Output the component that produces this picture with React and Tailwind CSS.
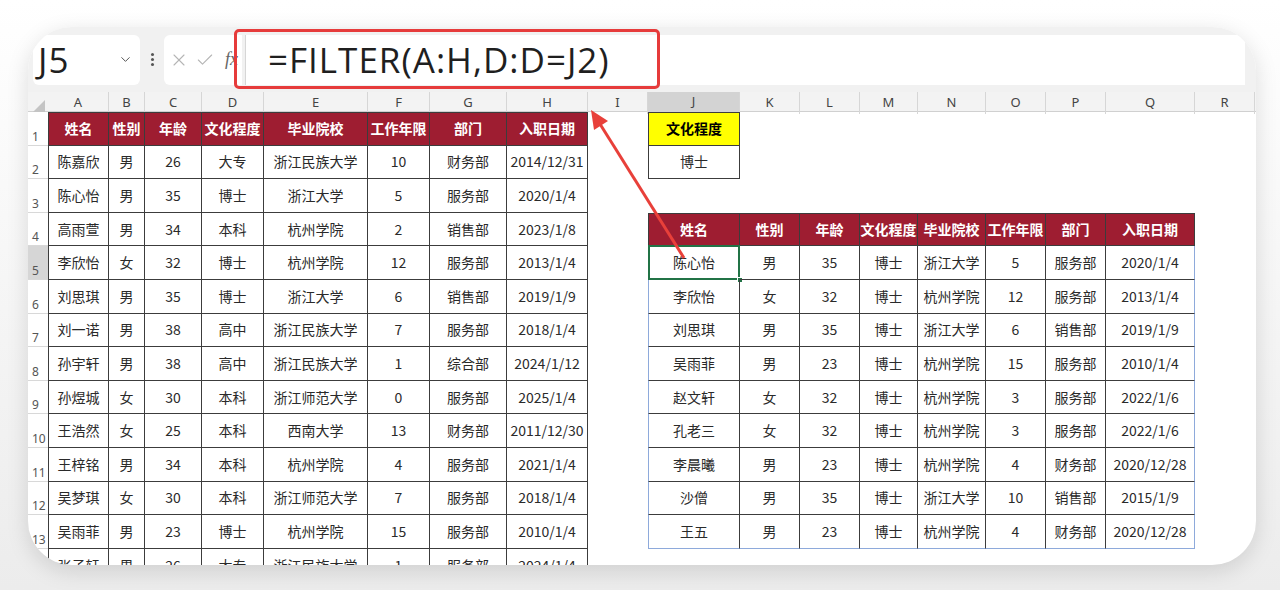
import { ChevronDown, X, Check } from 'lucide-react';
import clsx from 'clsx';

const head = ['姓名', '性别', '年龄', '文化程度', '毕业院校', '工作年限', '部门', '入职日期'];

const left = [
  ['陈嘉欣', '男', '26', '大专', '浙江民族大学', '10', '财务部', '2014/12/31'],
  ['陈心怡', '男', '35', '博士', '浙江大学', '5', '服务部', '2020/1/4'],
  ['高雨萱', '男', '34', '本科', '杭州学院', '2', '销售部', '2023/1/8'],
  ['李欣怡', '女', '32', '博士', '杭州学院', '12', '服务部', '2013/1/4'],
  ['刘思琪', '男', '35', '博士', '浙江大学', '6', '销售部', '2019/1/9'],
  ['刘一诺', '男', '38', '高中', '浙江民族大学', '7', '服务部', '2018/1/4'],
  ['孙宇轩', '男', '38', '高中', '浙江民族大学', '1', '综合部', '2024/1/12'],
  ['孙煜城', '女', '30', '本科', '浙江师范大学', '0', '服务部', '2025/1/4'],
  ['王浩然', '女', '25', '本科', '西南大学', '13', '财务部', '2011/12/30'],
  ['王梓铭', '男', '34', '本科', '杭州学院', '4', '服务部', '2021/1/4'],
  ['吴梦琪', '女', '30', '本科', '浙江师范大学', '7', '服务部', '2018/1/4'],
  ['吴雨菲', '男', '23', '博士', '杭州学院', '15', '服务部', '2010/1/4'],
  ['张子轩', '男', '26', '大专', '浙江民族大学', '1', '服务部', '2024/1/4'],
];

const right = [
  ['陈心怡', '男', '35', '博士', '浙江大学', '5', '服务部', '2020/1/4'],
  ['李欣怡', '女', '32', '博士', '杭州学院', '12', '服务部', '2013/1/4'],
  ['刘思琪', '男', '35', '博士', '浙江大学', '6', '销售部', '2019/1/9'],
  ['吴雨菲', '男', '23', '博士', '杭州学院', '15', '服务部', '2010/1/4'],
  ['赵文轩', '女', '32', '博士', '杭州学院', '3', '服务部', '2022/1/6'],
  ['孔老三', '女', '32', '博士', '杭州学院', '3', '服务部', '2022/1/6'],
  ['李晨曦', '男', '23', '博士', '杭州学院', '4', '财务部', '2020/12/28'],
  ['沙僧', '男', '35', '博士', '浙江大学', '10', '销售部', '2015/1/9'],
  ['王五', '男', '23', '博士', '杭州学院', '4', '财务部', '2020/12/28'],
];

const letters = 'ABCDEFGHIJKLMNOPQR'.split('');
const rows = [1, 2, 3, 4, 5, 6, 7, 8, 9, 10, 11, 12, 13, 14];

const GRID =
  'grid grid-cols-[20px_61px_36px_57px_62px_104px_62px_77px_81px_60px_92px_60px_60px_58px_68px_60px_60px_89px_60px]';

function Cell({ row, c }) {
  let text = '';
  let kind = 'empty';
  let borders = '';

  // left table A:H
  if (c <= 7) {
    kind = row === 1 ? 'head' : 'data';
    text = row === 1 ? head[c] : left[row - 2][c];
    borders = clsx('border-r border-b border-[#3c3c3c]', c === 0 && 'border-l', row === 1 && 'border-t');
  }

  // criteria J1:J2
  if (c === 9 && row <= 2) {
    kind = row === 1 ? 'yellow' : 'data';
    text = row === 1 ? '文化程度' : '博士';
    borders = clsx('border-l border-r border-b border-[#3c3c3c]', row === 1 && 'border-t');
  }

  // filter result J4:Q13
  if (c >= 9 && c <= 16 && row >= 4 && row <= 13) {
    kind = row === 4 ? 'head' : 'data';
    text = row === 4 ? head[c - 9] : right[row - 5][c - 9];
    borders = clsx(
      'border-r border-b border-[#3c3c3c]',
      c === 9 && 'border-l',
      row === 4 && 'border-t',
      row >= 5 && c === 9 && 'border-l-[#8eaadb]',
      row >= 5 && c === 16 && 'border-r-[#8eaadb]',
      row === 13 && 'border-b-[#8eaadb]'
    );
  }

  const active = row === 5 && c === 9;

  return (
    <div
      className={clsx(
        'relative flex items-center justify-center whitespace-nowrap overflow-hidden text-[14px]',
        borders,
        kind === 'head' && 'bg-[#9e1d31] text-white font-bold',
        kind === 'yellow' && 'bg-[#ffff00] text-black font-bold',
        kind === 'data' && 'text-[#2a2a2a]',
        active && 'overflow-visible'
      )}
    >
      {text}
      {active && (
        <>
          <div className="absolute -inset-[1px] border-2 border-[#217346]" />
          <div className="absolute -right-[4px] -bottom-[4px] w-[6px] h-[6px] bg-[#217346] border border-white" />
        </>
      )}
    </div>
  );
}

function App() {
  return (
    <div className="w-[1280px] h-[590px] bg-linear-to-b from-white to-[#ececec] pt-[27px] pl-[28px] overflow-hidden">
      <div className="relative w-[1228px] h-[538px] bg-white rounded-[44px] overflow-hidden shadow-[0_6px_22px_rgba(0,0,0,0.13)] font-['Noto_Sans_CJK_SC',sans-serif]">
        {/* formula bar */}
        <div className="h-[65px] bg-[#f1f1f1] flex items-center pl-[5px]">
          <div className="w-[107px] h-[50px] bg-white rounded-[6px] flex items-center justify-between pl-[5px] pr-[7px]">
            <span className="font-['Open_Sans',sans-serif] text-[35px] leading-none text-[#1f1f1f] tracking-[1px]">J5</span>
            <ChevronDown size={15} strokeWidth={1.6} className="text-[#555]" />
          </div>
          <div className="w-[24px] flex flex-col items-center gap-[2px]">
            <span className="w-[3px] h-[3px] rounded-full bg-[#555]" />
            <span className="w-[3px] h-[3px] rounded-full bg-[#555]" />
            <span className="w-[3px] h-[3px] rounded-full bg-[#555]" />
          </div>
          <div className="w-[78px] h-[50px] bg-white rounded-l-[6px] flex items-center pl-[5px] gap-[6px] text-[#b5b5b5]">
            <X size={20} strokeWidth={1.3} />
            <Check size={20} strokeWidth={1.3} />
            <span className="ml-[4px] font-['Liberation_Serif',serif] italic text-[18px] text-[#666]">fx</span>
          </div>
          <div className="ml-[3px] w-[1000px] h-[50px] bg-white border-l border-[#d6d6d6] flex items-center pl-[22px]">
            <span className="font-['Open_Sans',sans-serif] text-[35px] leading-none text-[#1f1f1f] tracking-[1px]">
              =FILTER(A:H,D:D=J2)
            </span>
          </div>
        </div>

        {/* column headers */}
        <div className={clsx(GRID, 'h-[20px] bg-[#f3f3f3] border-b border-[#d0d0d0]')}>
          <div className="flex items-end justify-end pr-[3px] pb-[2px]">
            <svg width="12" height="12" viewBox="0 0 12 12">
              <polygon points="12,0 12,12 0,12" fill="#c4c4c4" />
            </svg>
          </div>
          {letters.map((l) => (
            <div
              key={l}
              className={clsx(
                "flex items-center justify-center border-r border-[#d6d6d6] font-['Noto_Sans',sans-serif] text-[13px] text-[#444]",
                l === 'J' && 'bg-[#d3d3d3] border-b-2 border-b-[#217346]'
              )}
            >
              {l}
            </div>
          ))}
        </div>

        {/* rows */}
        {rows.map((row) => (
          <div key={row} className={clsx(GRID, 'h-[33.6px]')}>
            <div
              className={clsx(
                "flex items-end pl-[4px] text-[12px] text-[#555] font-['Noto_Sans',sans-serif] leading-[16px] border-b border-[#d8d8d8]",
                row === 5 && 'bg-[#d6d6d6] text-[#222]'
              )}
            >
              {row}
            </div>
            {letters.map((l, c) => (
              <Cell key={l} row={row} c={c} />
            ))}
          </div>
        ))}

        {/* annotation: red box + arrow */}
        <div className="absolute left-[206px] top-[2px] w-[426px] h-[60px] border-[3px] border-[#e63b3b] rounded-[5px]" />
        <svg className="absolute inset-0 pointer-events-none" width="1228" height="538">
          <line x1="572" y1="97" x2="656" y2="231" stroke="#e8403a" strokeWidth="3" />
          <polygon points="563,83 580,94 566,103" fill="#e8403a" />
        </svg>
      </div>
    </div>
  );
}

export default App;
